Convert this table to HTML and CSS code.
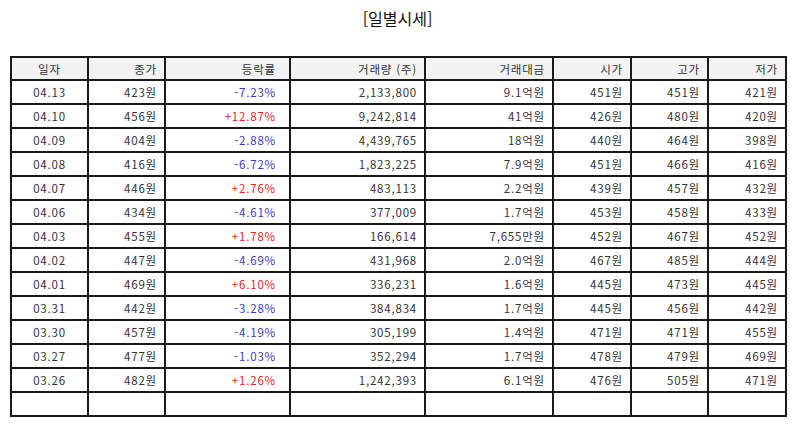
FILE: index.html
```html
<!DOCTYPE html>
<html lang="ko">
<head>
<meta charset="utf-8">
<link rel="stylesheet" href="styles.css">
</head>
<body>
<div class="page">
  <h1 class="title">[일별시세]</h1>
  <table class="prices">
    <colgroup>
      <col class="c-date"><col class="c-close"><col class="c-rate"><col class="c-vol"><col class="c-amt"><col class="c-open"><col class="c-high"><col class="c-low">
    </colgroup>
    <thead>
      <tr><th class="center">일자</th><th>종가</th><th class="rate">등락률</th><th>거래량 (주)</th><th>거래대금</th><th>시가</th><th>고가</th><th>저가</th></tr>
    </thead>
    <tbody>
      <tr><td class="center">04.13</td><td>423원</td><td class="rate down">-7.23%</td><td>2,133,800</td><td>9.1억원</td><td>451원</td><td>451원</td><td>421원</td></tr>
      <tr><td class="center">04.10</td><td>456원</td><td class="rate up">+12.87%</td><td>9,242,814</td><td>41억원</td><td>426원</td><td>480원</td><td>420원</td></tr>
      <tr><td class="center">04.09</td><td>404원</td><td class="rate down">-2.88%</td><td>4,439,765</td><td>18억원</td><td>440원</td><td>464원</td><td>398원</td></tr>
      <tr><td class="center">04.08</td><td>416원</td><td class="rate down">-6.72%</td><td>1,823,225</td><td>7.9억원</td><td>451원</td><td>466원</td><td>416원</td></tr>
      <tr><td class="center">04.07</td><td>446원</td><td class="rate up">+2.76%</td><td>483,113</td><td>2.2억원</td><td>439원</td><td>457원</td><td>432원</td></tr>
      <tr><td class="center">04.06</td><td>434원</td><td class="rate down">-4.61%</td><td>377,009</td><td>1.7억원</td><td>453원</td><td>458원</td><td>433원</td></tr>
      <tr><td class="center">04.03</td><td>455원</td><td class="rate up">+1.78%</td><td>166,614</td><td>7,655만원</td><td>452원</td><td>467원</td><td>452원</td></tr>
      <tr><td class="center">04.02</td><td>447원</td><td class="rate down">-4.69%</td><td>431,968</td><td>2.0억원</td><td>467원</td><td>485원</td><td>444원</td></tr>
      <tr><td class="center">04.01</td><td>469원</td><td class="rate up">+6.10%</td><td>336,231</td><td>1.6억원</td><td>445원</td><td>473원</td><td>445원</td></tr>
      <tr><td class="center">03.31</td><td>442원</td><td class="rate down">-3.28%</td><td>384,834</td><td>1.7억원</td><td>445원</td><td>456원</td><td>442원</td></tr>
      <tr><td class="center">03.30</td><td>457원</td><td class="rate down">-4.19%</td><td>305,199</td><td>1.4억원</td><td>471원</td><td>471원</td><td>455원</td></tr>
      <tr><td class="center">03.27</td><td>477원</td><td class="rate down">-1.03%</td><td>352,294</td><td>1.7억원</td><td>478원</td><td>479원</td><td>469원</td></tr>
      <tr><td class="center">03.26</td><td>482원</td><td class="rate up">+1.26%</td><td>1,242,393</td><td>6.1억원</td><td>476원</td><td>505원</td><td>471원</td></tr>
      <tr class="empty"><td></td><td></td><td></td><td></td><td></td><td></td><td></td><td></td></tr>
    </tbody>
  </table>
</div>
</body>
</html>
```

FILE: styles.css
```css
html, body {
  margin: 0;
  padding: 0;
  background: #fff;
}
body {
  font-family: "Noto Sans CJK KR", "Noto Sans", sans-serif;
  color: #333;
}
.page {
  padding: 7px 9px 0 10px;
}
.title {
  margin: 0;
  text-align: center;
  font-size: 16px;
  font-weight: normal;
  line-height: 22px;
  color: #111;
}
.prices {
  margin-top: 27px;
  width: 775px;
  border-collapse: collapse;
  table-layout: fixed;
  font-size: 11.5px;
  letter-spacing: 0.8px;
  border: 2px solid #1a1a1a;
}
.c-date { width: 77px; }
.c-close { width: 77px; }
.c-rate { width: 125px; }
.c-vol { width: 135px; }
.c-amt { width: 128px; }
.c-open { width: 78px; }
.c-high { width: 77px; }
.c-low { width: 78px; }
.prices th,
.prices td {
  border: 2px solid #1a1a1a;
  height: 22px;
  padding: 0 7px 0 4px;
  text-align: right;
  font-weight: normal;
  line-height: 20px;
  white-space: nowrap;
}
.prices th {
  background: #f2f2f2;
  height: 21px;
}
.prices .center {
  text-align: center;
  padding: 0;
}
.prices .rate {
  padding-right: 13px;
}
.down { color: #3a3ac4; }
.up { color: #e02828; }
```
